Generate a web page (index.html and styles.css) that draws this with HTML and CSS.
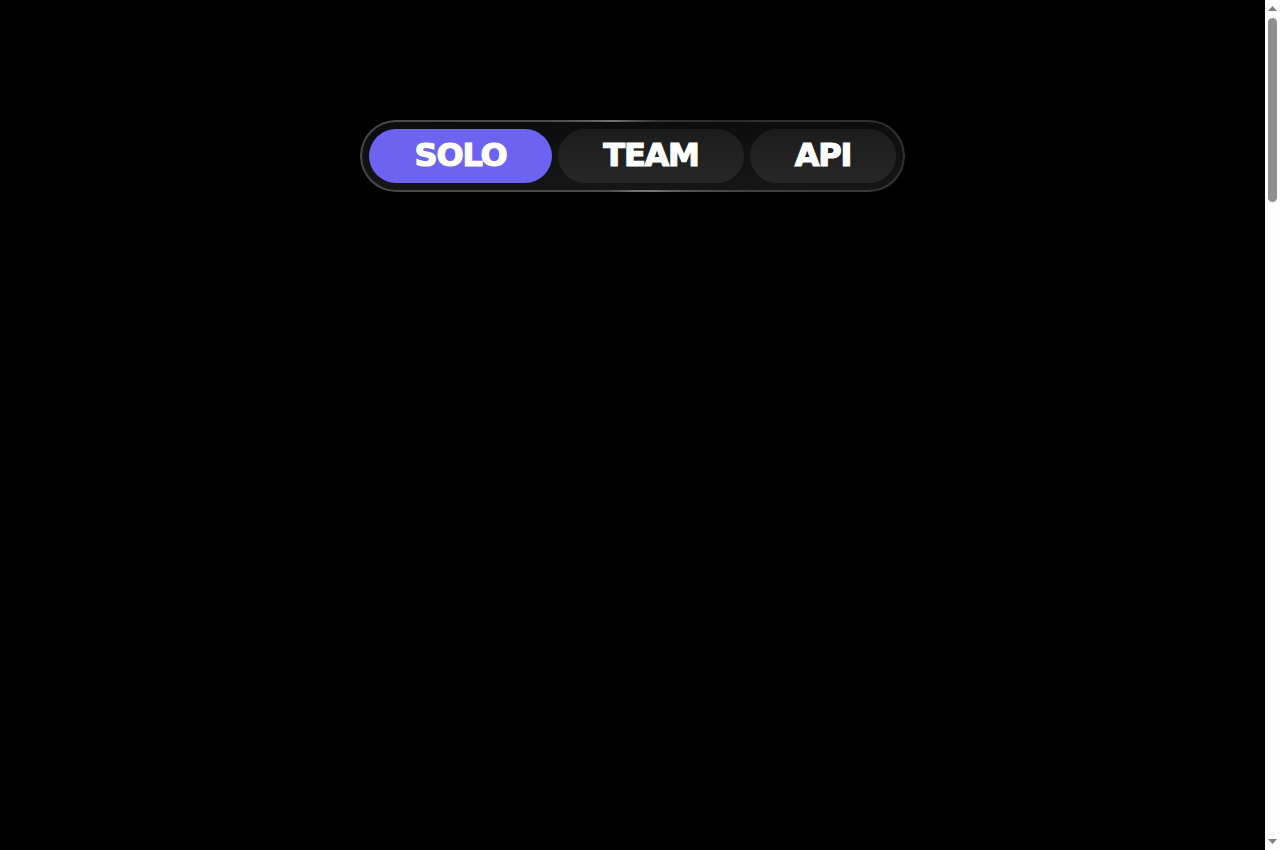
FILE: index.html
```html
<!DOCTYPE html>
<html lang="en">
<head>
    <meta charset="UTF-8">
    <meta name="viewport" content="width=device-width, initial-scale=1.0">
    <title>Pricing</title>
    <link rel="stylesheet" href="styles.css">
</head>
<body>

    <main class="pricing">
        <div class="plan-switch">
            <button class="plan-btn plan-solo active">SOLO</button>
            <button class="plan-btn plan-team">TEAM</button>
            <button class="plan-btn plan-api">API</button>
        </div>
    </main>

    <div class="scrollbar">
        <svg class="scroll-arrow" width="15" height="17" viewBox="0 0 15 17"><polygon points="3,11 7.5,6 12,11" /></svg>
        <div class="scroll-thumb"></div>
        <div class="scroll-rest"></div>
        <svg class="scroll-arrow" width="15" height="17" viewBox="0 0 15 17"><polygon points="3,6 12,6 7.5,11" /></svg>
    </div>

</body>
</html>
```

FILE: styles.css
```css
html, body {
    height: 100%;
}

body {
    display: flex;
    margin: 0;
    overflow: hidden;
    background-color: #000000;
    font-family: 'DejaVu Sans', sans-serif;
}

.pricing {
    display: flex;
    flex: 1;
    justify-content: center;
    align-items: flex-start;
    padding-top: 120px;
}

.plan-switch {
    display: flex;
    gap: 6px;
    width: 545px;
    height: 72px;
    padding: 7px;
    box-sizing: border-box;
    border: 2px solid transparent;
    border-radius: 36px;
    background:
        linear-gradient(#0c0c0c, #161616) padding-box,
        conic-gradient(from 0deg at 50% 50%,
            #505050 0deg, #343434 40deg, #2c2c2c 70deg, #343434 95deg, #4c4c4c 115deg,
            #777777 150deg, #6a6a6a 185deg, #4a4a4a 215deg, #474747 270deg, #505050 295deg,
            #747474 330deg, #505050 360deg) border-box;
}

.plan-btn {
    height: 54px;
    padding: 0 0 2px;
    border: none;
    border-radius: 27px;
    background: linear-gradient(#1c1c1c, #272727);
    color: #FFFFFF;
    font-family: inherit;
    font-size: 32px;
    font-weight: bold;
    letter-spacing: -1.2px;
    -webkit-text-stroke: 1.2px #FFFFFF;
    cursor: pointer;
}

.plan-btn.active {
    background: #6C63F0;
}

.plan-solo {
    width: 183px;
}

.plan-team {
    width: 186px;
}

.plan-api {
    width: 146px;
}

.scrollbar {
    display: flex;
    flex-direction: column;
    align-items: center;
    width: 15px;
    background-color: #FDFDFD;
}

.scroll-arrow {
    flex: none;
    fill: #808080;
}

.scroll-thumb {
    flex: none;
    width: 9px;
    height: 184px;
    margin-top: 1px;
    border-radius: 5px;
    background-color: #8F8F8F;
}

.scroll-rest {
    flex: 1;
}
```
